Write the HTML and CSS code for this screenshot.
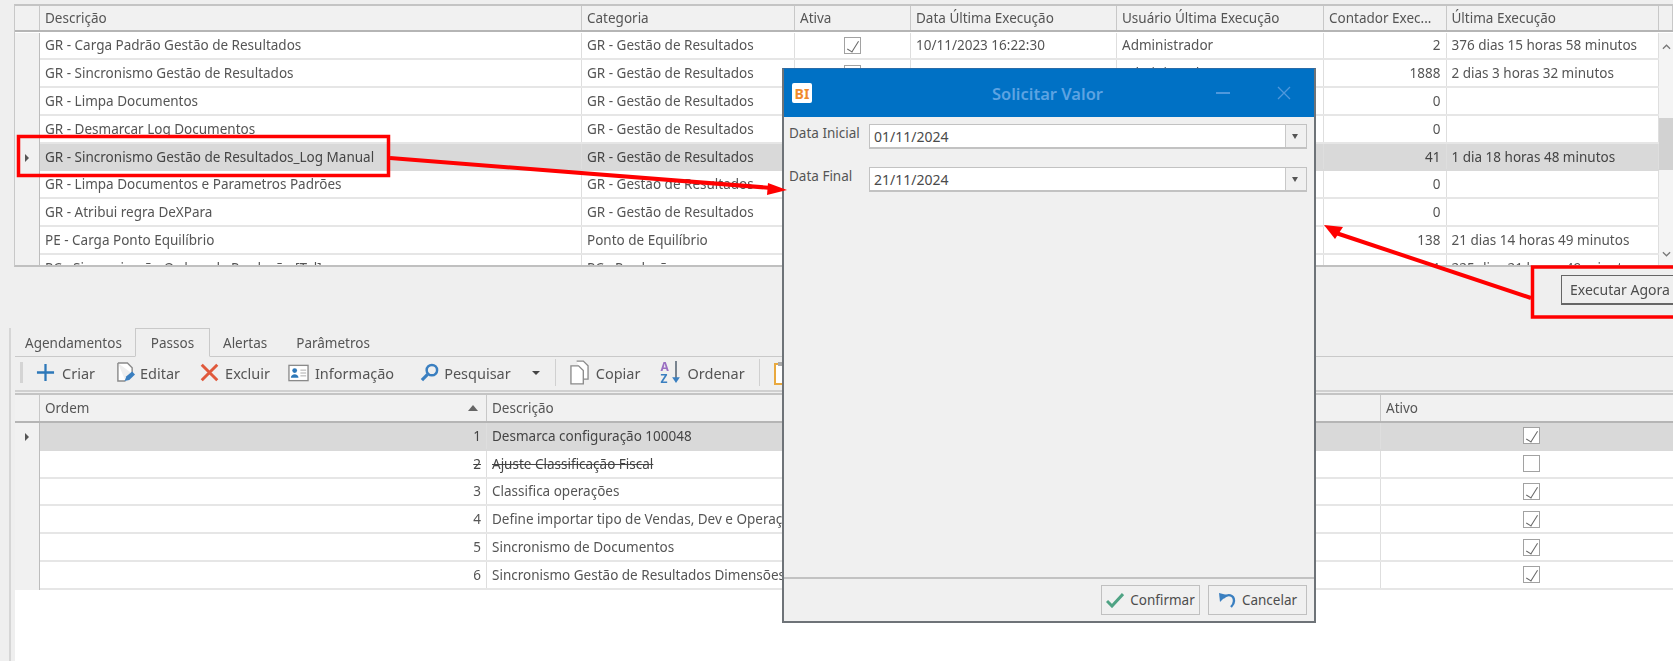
FILE: index.html
```html
<!DOCTYPE html>
<html lang="pt-BR">
<head>
<meta charset="utf-8">
<title>Solicitar Valor</title>
<link rel="stylesheet" href="styles.css">
</head>
<body>
<div class="screen">
  <section class="top">
    <div class="grid">
      <div class="row head cols-top">
        <div class="cell ind"></div><div class="cell">Descrição</div><div class="cell">Categoria</div><div class="cell">Ativa</div><div class="cell">Data Última Execução</div><div class="cell">Usuário Última Execução</div><div class="cell">Contador Exec...</div><div class="cell">Última Execução</div><div class="cell"></div>
      </div>
      <div class="grid-body">
        <div class="rows">
          <div class="row cols-main"><div class="cell ind"></div><div class="cell">GR - Carga Padrão Gestão de Resultados</div><div class="cell">GR - Gestão de Resultados</div><div class="cell center"><span class="check on"></span></div><div class="cell">10/11/2023 16:22:30</div><div class="cell">Administrador</div><div class="cell num">2</div><div class="cell">376 dias 15 horas 58 minutos</div></div>
          <div class="row cols-main"><div class="cell ind"></div><div class="cell">GR - Sincronismo Gestão de Resultados</div><div class="cell">GR - Gestão de Resultados</div><div class="cell center"><span class="check"></span></div><div class="cell">19/11/2024 08:50:12</div><div class="cell">Administrador</div><div class="cell num">1888</div><div class="cell">2 dias 3 horas 32 minutos</div></div>
          <div class="row cols-main"><div class="cell ind"></div><div class="cell">GR - Limpa Documentos</div><div class="cell">GR - Gestão de Resultados</div><div class="cell center"></div><div class="cell"></div><div class="cell"></div><div class="cell num">0</div><div class="cell"></div></div>
          <div class="row cols-main"><div class="cell ind"></div><div class="cell">GR - Desmarcar Log Documentos</div><div class="cell">GR - Gestão de Resultados</div><div class="cell center"></div><div class="cell"></div><div class="cell"></div><div class="cell num">0</div><div class="cell"></div></div>
          <div class="row cols-main selected"><div class="cell ind"><span class="pointer"></span></div><div class="cell">GR - Sincronismo Gestão de Resultados_Log Manual</div><div class="cell">GR - Gestão de Resultados</div><div class="cell center"></div><div class="cell"></div><div class="cell"></div><div class="cell num">41</div><div class="cell">1 dia 18 horas 48 minutos</div></div>
          <div class="row cols-main"><div class="cell ind"></div><div class="cell">GR - Limpa Documentos e Parametros Padrões</div><div class="cell">GR - Gestão de Resultados</div><div class="cell center"></div><div class="cell"></div><div class="cell"></div><div class="cell num">0</div><div class="cell"></div></div>
          <div class="row cols-main"><div class="cell ind"></div><div class="cell">GR - Atribui regra DeXPara</div><div class="cell">GR - Gestão de Resultados</div><div class="cell center"></div><div class="cell"></div><div class="cell"></div><div class="cell num">0</div><div class="cell"></div></div>
          <div class="row cols-main"><div class="cell ind"></div><div class="cell">PE - Carga Ponto Equilíbrio</div><div class="cell">Ponto de Equilíbrio</div><div class="cell center"></div><div class="cell"></div><div class="cell"></div><div class="cell num">138</div><div class="cell">21 dias 14 horas 49 minutos</div></div>
          <div class="row cols-main"><div class="cell ind"></div><div class="cell">PC - Sincronização Ordem de Produção [Tel]</div><div class="cell">PC - Produção</div><div class="cell center"></div><div class="cell"></div><div class="cell"></div><div class="cell num">1</div><div class="cell">225 dias 21 horas 49 minutos</div></div>
        </div>
        <div class="scrollbar">
          <svg class="scroll-arrow" viewBox="0 0 10 6"><path d="M1 5l4-4 4 4"/></svg>
          <div class="thumb"></div>
          <svg class="scroll-arrow" viewBox="0 0 10 6"><path d="M1 1l4 4 4-4"/></svg>
        </div>
      </div>
    </div>
    <div class="actions"><button class="run">Executar Agora</button></div>
  </section>

  <section class="lower">
    <nav class="tabs">
      <span class="tab">Agendamentos</span>
      <span class="tab active">Passos</span>
      <span class="tab">Alertas</span>
      <span class="tab">Parâmetros</span>
    </nav>
    <div class="toolbar">
      <span class="grip"></span>
      <span class="tool t-criar"><svg class="ico" viewBox="0 0 20 20"><path d="M10 1v18M1 10h18" stroke="#2d78b9" stroke-width="2.4" fill="none"/></svg>Criar</span>
      <span class="tool t-editar"><svg class="ico" viewBox="0 0 20 22"><path d="M2 1h10l5 5v6M2 1v19h8" stroke="#8a8a8a" stroke-width="1.5" fill="#fff"/><path d="M9 20l2-5 6-5 3 3-6 6z" fill="#3a7fc0"/></svg>Editar</span>
      <span class="tool t-excluir"><svg class="ico" viewBox="0 0 22 22"><path d="M2 2l18 18M20 2L2 20" stroke="#e0593c" stroke-width="3.4" fill="none"/></svg>Excluir</span>
      <span class="tool t-info"><svg class="ico wide" viewBox="0 0 22 18"><rect x="1" y="1" width="20" height="16" fill="#fff" stroke="#8a8a8a" stroke-width="1.4"/><circle cx="7" cy="6.500" r="2.500" fill="#2d78b9"/><path d="M3 14c0-5 8-5 8 0z" fill="#2d78b9"/><path d="M13 6h6M13 9h6M13 12h6" stroke="#aaa"/></svg>Informação</span>
      <span class="tool t-pesq"><svg class="ico" viewBox="0 0 20 20"><circle cx="12.500" cy="7.500" r="5.500" fill="none" stroke="#3a7fc0" stroke-width="2.600"/><path d="M8 12l-6 6" stroke="#3a7fc0" stroke-width="3.400" fill="none"/></svg>Pesquisar</span>
      <span class="drop"></span>
      <span class="sep"></span>
      <span class="tool t-copiar"><svg class="ico tall" viewBox="0 0 20 26"><path d="M7 1h7l5 5v14h-5" stroke="#8a8a8a" stroke-width="1.400" fill="#fff"/><path d="M1 6h8l5 5v14H1z" stroke="#8a8a8a" stroke-width="1.400" fill="#fff"/></svg>Copiar</span>
      <span class="tool t-ordenar"><span class="az"><span class="az-a">A</span><span class="az-z">Z</span></span><svg class="sort-arrow" viewBox="0 0 8 26"><path d="M4 1v20" stroke="#4a5a6a" stroke-width="1.500"/><path d="M0 18h8l-4 6z" fill="#3a7fc0"/></svg>Ordenar</span>
      <span class="sep"></span>
      <svg class="ico clip" viewBox="0 0 14 24"><rect x="1" y="3" width="12" height="20" fill="#fff" stroke="#e9a93f" stroke-width="2"/><rect x="4" y="1" width="6" height="4" fill="#aaa"/></svg>
    </div>
    <div class="grid steps">
      <div class="row head cols-steps">
        <div class="cell ind"></div><div class="cell sort">Ordem<span class="sort-up"></span></div><div class="cell">Descrição</div><div class="cell">Ativo</div>
      </div>
      <div class="row cols-steps selected"><div class="cell ind"><span class="pointer"></span></div><div class="cell num">1</div><div class="cell">Desmarca configuração 100048</div><div class="cell center"><span class="check on"></span></div></div>
      <div class="row cols-steps struck"><div class="cell ind"></div><div class="cell num">2</div><div class="cell">Ajuste Classificação Fiscal</div><div class="cell center"><span class="check"></span></div></div>
      <div class="row cols-steps"><div class="cell ind"></div><div class="cell num">3</div><div class="cell">Classifica operações</div><div class="cell center"><span class="check on"></span></div></div>
      <div class="row cols-steps"><div class="cell ind"></div><div class="cell num">4</div><div class="cell">Define importar tipo de Vendas, Dev e Operações</div><div class="cell center"><span class="check on"></span></div></div>
      <div class="row cols-steps"><div class="cell ind"></div><div class="cell num">5</div><div class="cell">Sincronismo de Documentos</div><div class="cell center"><span class="check on"></span></div></div>
      <div class="row cols-steps"><div class="cell ind"></div><div class="cell num">6</div><div class="cell">Sincronismo Gestão de Resultados Dimensões</div><div class="cell center"><span class="check on"></span></div></div>
    </div>
  </section>

  <div class="dialog">
    <header class="dlg-title">
      <span class="logo">BI</span>
      <span class="dlg-name">Solicitar Valor</span>
      <span class="dlg-min"></span>
      <svg class="dlg-close" viewBox="0 0 14 14"><path d="M1 1l12 12M13 1L1 13"/></svg>
    </header>
    <div class="dlg-form">
      <div class="field"><label class="field-label">Data Inicial</label><div class="combo"><span class="combo-value">01/11/2024</span><span class="combo-btn"></span></div></div>
      <div class="field"><label class="field-label">Data Final</label><div class="combo"><span class="combo-value">21/11/2024</span><span class="combo-btn"></span></div></div>
    </div>
    <footer class="dlg-foot">
      <button class="dlg-btn"><svg class="btn-ico" viewBox="0 0 18 16"><path d="M1 9l5 5L17 2" fill="none" stroke="#4fa384" stroke-width="3"/></svg>Confirmar</button>
      <button class="dlg-btn"><svg class="btn-ico" viewBox="0 0 18 16"><path d="M5 6c5-5 11-3 11 3 0 2-1 4-3 6" fill="none" stroke="#3a7fc0" stroke-width="2.400"/><path d="M1 1l8 2-7 7z" fill="#3a7fc0"/></svg>Cancelar</button>
    </footer>
  </div>

  <svg class="marks" viewBox="0 0 1673 661">
    <rect class="mark" x="18.500" y="136.500" width="370" height="39"/>
    <rect class="mark" x="1532.500" y="267" width="160" height="50"/>
    <path class="mark thick" d="M390 158L772 188"/>
    <path class="mark-fill" d="M787 190L768 183L767 195Z"/>
    <path class="mark thick" d="M1531 298L1336 233"/>
    <path class="mark-fill" d="M1324 225L1343 227L1335 239Z"/>
  </svg>
</div>
</body>
</html>
```
FILE: styles.css
```css
* { box-sizing: border-box; }
html, body { margin: 0; height: 100%; }
body { background: #efefef; overflow: hidden; }
.screen {
  position: relative;
  width: 1673px;
  height: 661px;
  overflow: hidden;
  font: 13.5px "Noto Sans", "Liberation Sans", sans-serif;
  color: #555;
  filter: blur(0.55px);
}

/* shared grid parts */
.grid { background: #fff; border-top: 2px solid #c4c4c4; }
.row { display: grid; height: 27.8px; border-bottom: 2px solid #e6e6e6; }
.head { height: 26px; background: #f1f1f1; border-bottom: 2px solid #b5b5b5; }
.cols-top { grid-template-columns: 25px 542px 213px 116px 206px 207px 122.5px 212.5px 14px; }
.cols-main { grid-template-columns: 25px 542px 213px 116px 206px 207px 122.5px 212.5px; }
.cols-steps { grid-template-columns: 25px 447px 894px 302px; }
.cell {
  display: flex;
  align-items: center;
  padding: 0 5px;
  white-space: nowrap;
  overflow: hidden;
  border-right: 1px solid #dedede;
}
.head .cell { border-right-color: #c8c8c8; }
.ind { background: #f1f1f1; padding: 0; justify-content: center; border-right: 1px solid #bdbdbd; }
.row:not(.head) .ind { margin-bottom: -2px; }
.num { justify-content: flex-end; }
.center { justify-content: center; }
.selected { background: #d9d9d9; border-bottom-color: #d9d9d9; color: #444; }
.selected .ind { background: #f1f1f1; }
.struck .cell:nth-child(2), .struck .cell:nth-child(3) { text-decoration: line-through; color: #444; }
.pointer { width: 0; height: 0; border-left: 4px solid #555; border-top: 4px solid transparent; border-bottom: 4px solid transparent; }
.check { position: relative; width: 17px; height: 17px; background: #fff; border: 1px solid #a2a2a2; }
.check.on::after {
  content: "";
  position: absolute;
  left: 5px; top: 1px;
  width: 5px; height: 12px;
  border: solid #666;
  border-width: 0 1.5px 1.5px 0;
  transform: rotate(32deg);
}

/* top section */
.top { padding: 4px 0 0 14px; }
.top .grid { border-bottom: 2px solid #c0c0c0; border-left: 1px solid #c8c8c8; }
.grid-body { display: flex; height: 233px; overflow: hidden; padding-top: 0.5px; }
.rows { width: 1644px; flex: none; }
.scrollbar { flex: 1; display: flex; flex-direction: column; align-items: center; background: #f4f4f4; padding: 11px 0 6px; }
.scroll-arrow { width: 9px; height: 6px; flex: none; fill: none; stroke: #777; stroke-width: 1.4; }
.thumb { align-self: stretch; height: 52px; flex: none; background: #d2d2d2; margin: 68px 0 81px; }
.actions { display: flex; justify-content: flex-end; height: 61px; padding-top: 8px; overflow: visible; }
.run {
  width: 145px; height: 30px; margin-right: -33px; flex: none;
  padding: 0 0 0 8px; text-align: left;
  font: inherit; font-size: 14px; color: #4d4d4d;
  background: #efefef; border: 1px solid #666; border-bottom-width: 2px;
}

/* lower section */
.lower { margin-left: 9px; padding-left: 4px; border-left: 2px solid #d6d6d6; }
.tabs { display: flex; height: 29px; border-bottom: 1px solid #c9c9c9; }
.tab { display: flex; align-items: center; padding: 1px 14px 0 15px; margin-bottom: -1px; }
.tab:first-child { width: 120px; padding-left: 10px; }
.tab.active { width: 75px; justify-content: center; padding: 1px 0 0; background: #efefef; border: 1px solid #c9c9c9; border-bottom-color: #efefef; }
.tab:nth-child(3) { padding-left: 13px; }
.toolbar {
  display: flex; align-items: center;
  height: 35px; padding: 0 0 2px 5px;
  font-size: 14.5px;
  border-bottom: 2px solid #d0d0d0;
}
.grip { width: 3px; height: 21px; background: #d4d4d4; margin-right: 13px; }
.tool { display: flex; align-items: center; gap: 7px; }
.ico { width: 19px; height: 21px; flex: none; }
.ico.wide { width: 21px; height: 18px; }
.ico.tall { width: 19px; height: 25px; }
.t-criar { margin-right: 21px; }
.t-editar { gap: 5px; margin-right: 20px; }
.t-excluir { gap: 6px; margin-right: 18px; }
.t-info { gap: 6px; margin-right: 26px; }
.t-pesq { gap: 5px; }
.drop { width: 0; height: 0; margin: 0 15px 0 21px; border-top: 4px solid #444; border-left: 4px solid transparent; border-right: 4px solid transparent; }
.sep { width: 1px; height: 27px; background: #d0d0d0; margin-right: 14px; }
.t-copiar { gap: 7px; margin-right: 20px; }
.t-ordenar { gap: 7px; margin-right: 14px; }
.az { display: flex; flex-direction: column; width: 10px; font-size: 12px; font-weight: 700; line-height: 12px; }
.az-a { color: #9a6fc2; }
.az-z { color: #3a7fc0; }
.sort-arrow { width: 8px; height: 25px; flex: none; margin-left: -5px; }
.clip { width: 14px; height: 24px; }
.steps { margin-top: 1px; height: 280px; border-left: 0; }
.steps .head { height: 28px; }
.sort { position: relative; }
.sort-up { position: absolute; right: 8px; top: 10px; width: 0; height: 0; border-bottom: 6px solid #666; border-left: 5px solid transparent; border-right: 5px solid transparent; }

/* dialog */
.dialog {
  position: absolute; left: 782px; top: 68px;
  width: 534px; height: 555px;
  display: flex; flex-direction: column;
  background: #f0f0f0;
  border: 2px solid #6e7378; border-top: 1px solid #2a6ca8;
}
.dlg-title { display: flex; align-items: center; height: 48px; flex: none; padding: 0 23px 0 8px; background: #0071c5; }
.logo {
  display: flex; align-items: center; justify-content: center;
  width: 20px; height: 20px; border-radius: 2px;
  background: #fff; color: #f08a2c;
  font: bold 14px "Noto Sans", sans-serif;
}
.dlg-name { flex: 1; text-align: center; padding-left: 67px; color: #5da3e2; font-size: 16.5px; font-weight: 600; }
.dlg-min { width: 14px; height: 1.500px; background: #4f98dc; margin-right: 47px; }
.dlg-close { width: 14px; height: 14px; fill: none; stroke: #4f98dc; stroke-width: 1.300; }
.dlg-form { flex: 1; display: flex; flex-direction: column; gap: 18px; padding: 7px 7px 0 5px; }
.field { display: flex; align-items: flex-start; height: 25px; }
.field-label { width: 80px; flex: none; line-height: 18px; }
.combo { flex: 1; display: flex; height: 25px; background: #fff; border: 1px solid #c2c2c2; border-bottom-width: 2px; }
.combo-value { flex: 1; padding: 2px 4px 0; color: #4a4a4a; font-size: 14px; }
.combo-btn { position: relative; width: 21px; background: #f0f0f0; border-left: 1px solid #c8c8c8; }
.combo-btn::after { content: ""; position: absolute; left: 6px; top: 9px; border-top: 5px solid #555; border-left: 3.500px solid transparent; border-right: 3.500px solid transparent; }
.dlg-foot { display: flex; justify-content: flex-end; gap: 8px; height: 44px; flex: none; padding: 6px 7px 0 0; border-top: 2px solid #c2c2c2; }
.dlg-btn {
  display: flex; align-items: center; justify-content: center; gap: 6px;
  width: 99px; height: 30px; padding: 0;
  font: inherit; color: #4d4d4d;
  background: #f0f0f0; border: 1px solid #c0c0c0;
}
.btn-ico { width: 18px; height: 16px; flex: none; }

/* red annotations */
.marks { position: absolute; left: 0; top: 0; width: 1673px; height: 661px; pointer-events: none; }
.mark { fill: none; stroke: #f00; stroke-width: 3.500; }
.mark.thick { stroke-width: 4; }
.mark-fill { fill: #f00; }
```
